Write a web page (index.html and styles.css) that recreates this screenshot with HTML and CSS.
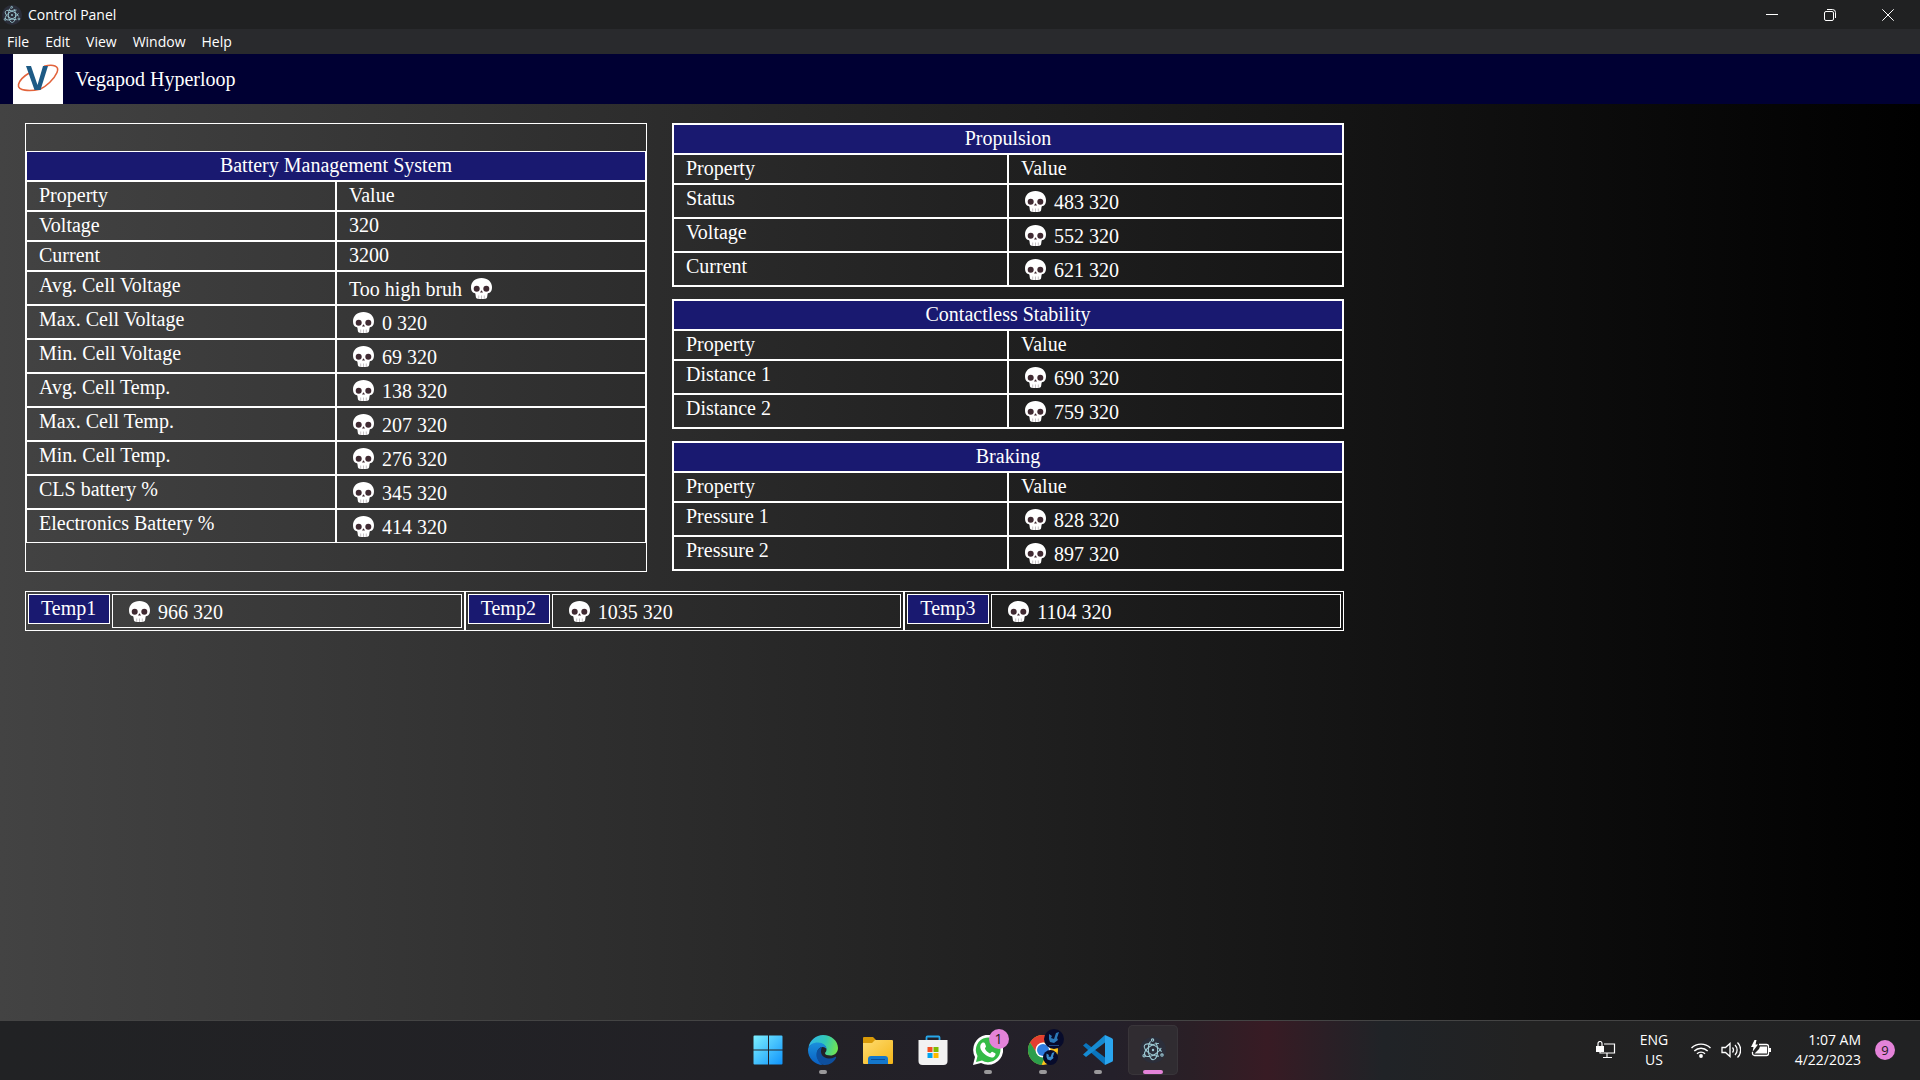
FILE: index.html
```html
<!DOCTYPE html>
<html lang="en">
<head>
<meta charset="utf-8">
<meta name="viewport" content="width=device-width, initial-scale=1">
<title>Control Panel</title>
<link rel="stylesheet" href="styles.css">
</head>
<body>
<svg class="sprite" aria-hidden="true">
  <symbol id="skull" viewBox="0 0 28 21">
    <path fill="#fff" d="M14.500 0C8.300 0 4 3.900 4 9c0 2.600.5 4.300 1.700 5.200.9.700 2.500.5 2.700 1.500l.5 3.600c.2 1.200 1.500 1.700 2.600 1.700h6c1.100 0 2.400-.5 2.600-1.700l.5-3.600c.2-1 1.800-.8 2.700-1.500C24.500 13.300 25 11.600 25 9c0-5.100-4.300-9-10.500-9z"/>
    <circle cx="9.700" cy="10.800" r="3" fill="#402a32"/>
    <circle cx="19.300" cy="10.800" r="3" fill="#402a32"/>
    <path fill="#402a32" d="M14.500 12.300l1.500 2.200h-3z"/>
    <path stroke="#b9b2b8" stroke-width=".8" d="M11.700 17.500V21M14.500 17.500V21M17.300 17.500V21"/>
  </symbol>
  <symbol id="electron" viewBox="0 0 24 24">
    <circle cx="12" cy="12" r="12" fill="#2b2e3a"/>
    <g fill="none" stroke="#9fccd6" stroke-width="1">
      <ellipse cx="12" cy="12" rx="9" ry="4.300" stroke-dasharray="37 6" stroke-dashoffset="-3" transform="rotate(-32 12 12)"/>
      <ellipse cx="12" cy="12" rx="9" ry="4.300" stroke-dasharray="37 6" stroke-dashoffset="-3" transform="rotate(28 12 12)"/>
      <ellipse cx="12" cy="12" rx="9" ry="4.300" stroke-dasharray="37 6" stroke-dashoffset="18" transform="rotate(88 12 12)"/>
      <circle cx="3.800" cy="17.300" r="1.100"/><circle cx="20.300" cy="16.700" r="1.100"/><circle cx="11.600" cy="2.800" r="1.100"/>
    </g>
    <circle cx="12" cy="12" r="1.100" fill="#9fccd6"/>
  </symbol>
</svg>

<header class="titlebar">
  <svg class="app-icon" aria-hidden="true"><use href="#electron"/></svg>
  <span class="window-title">Control Panel</span>
  <div class="window-controls">
    <button type="button" aria-label="Minimize"><svg viewBox="0 0 12 12"><path d="M0 5.500h12"/></svg></button>
    <button type="button" aria-label="Restore"><svg viewBox="0 0 12 12"><path d="M3 .5h5.500a3 3 0 0 1 3 3V9"/><rect x=".5" y="2.500" width="9" height="9" rx="1.500"/></svg></button>
    <button type="button" aria-label="Close"><svg viewBox="0 0 12 12"><path d="M.3.3l11.400 11.400M11.700.3L.3 11.700"/></svg></button>
  </div>
</header>
<nav class="menubar" aria-label="Application menu">
  <button type="button">File</button>
  <button type="button">Edit</button>
  <button type="button">View</button>
  <button type="button">Window</button>
  <button type="button">Help</button>
</nav>

<div class="brand">
  <svg class="logo" viewBox="0 0 50 50" role="img" aria-label="Vegapod logo">
    <rect width="50" height="50" fill="#fff"/>
    <path fill="none" stroke="#e2633c" stroke-width="1.600" d="M31 12.200C40 10 47 11.500 44 18.500C41 25.500 33 32.500 27 35.200C17 37.500 4 37 5.500 30.500C6.500 26 11 22 17 18.500"/>
    <path fill="#1d5a85" d="M13 12h5l6.500 19L30 12h5l-7.500 24h-6z"/>
  </svg>
  <span>Vegapod Hyperloop</span>
</div>

<main class="dashboard">
  <div class="systems">
    <section class="battery">
      <table>
        <thead>
          <tr><th class="heading" colspan="2">Battery Management System</th></tr>
          <tr><th>Property</th><th>Value</th></tr>
        </thead>
        <tbody>
          <tr><td>Voltage</td><td>320</td></tr>
          <tr><td>Current</td><td>3200</td></tr>
          <tr><td>Avg. Cell Voltage</td><td class="reading">Too high bruh <svg class="skull"><use href="#skull"/></svg></td></tr>
          <tr><td>Max. Cell Voltage</td><td class="reading"><svg class="skull"><use href="#skull"/></svg> 0 320</td></tr>
          <tr><td>Min. Cell Voltage</td><td class="reading"><svg class="skull"><use href="#skull"/></svg> 69 320</td></tr>
          <tr><td>Avg. Cell Temp.</td><td class="reading"><svg class="skull"><use href="#skull"/></svg> 138 320</td></tr>
          <tr><td>Max. Cell Temp.</td><td class="reading"><svg class="skull"><use href="#skull"/></svg> 207 320</td></tr>
          <tr><td>Min. Cell Temp.</td><td class="reading"><svg class="skull"><use href="#skull"/></svg> 276 320</td></tr>
          <tr><td>CLS battery %</td><td class="reading"><svg class="skull"><use href="#skull"/></svg> 345 320</td></tr>
          <tr><td>Electronics Battery %</td><td class="reading"><svg class="skull"><use href="#skull"/></svg> 414 320</td></tr>
        </tbody>
      </table>
    </section>
    <div class="stack">
      <table class="framed">
        <thead>
          <tr><th class="heading" colspan="2">Propulsion</th></tr>
          <tr><th>Property</th><th>Value</th></tr>
        </thead>
        <tbody>
          <tr><td>Status</td><td class="reading"><svg class="skull"><use href="#skull"/></svg> 483 320</td></tr>
          <tr><td>Voltage</td><td class="reading"><svg class="skull"><use href="#skull"/></svg> 552 320</td></tr>
          <tr><td>Current</td><td class="reading"><svg class="skull"><use href="#skull"/></svg> 621 320</td></tr>
        </tbody>
      </table>
      <table class="framed">
        <thead>
          <tr><th class="heading" colspan="2">Contactless Stability</th></tr>
          <tr><th>Property</th><th>Value</th></tr>
        </thead>
        <tbody>
          <tr><td>Distance 1</td><td class="reading"><svg class="skull"><use href="#skull"/></svg> 690 320</td></tr>
          <tr><td>Distance 2</td><td class="reading"><svg class="skull"><use href="#skull"/></svg> 759 320</td></tr>
        </tbody>
      </table>
      <table class="framed">
        <thead>
          <tr><th class="heading" colspan="2">Braking</th></tr>
          <tr><th>Property</th><th>Value</th></tr>
        </thead>
        <tbody>
          <tr><td>Pressure 1</td><td class="reading"><svg class="skull"><use href="#skull"/></svg> 828 320</td></tr>
          <tr><td>Pressure 2</td><td class="reading"><svg class="skull"><use href="#skull"/></svg> 897 320</td></tr>
        </tbody>
      </table>
    </div>
  </div>
  <dl class="temps">
    <div class="temp"><dt>Temp1</dt><dd class="reading"><svg class="skull"><use href="#skull"/></svg> 966 320</dd></div>
    <div class="temp"><dt>Temp2</dt><dd class="reading"><svg class="skull"><use href="#skull"/></svg> 1035 320</dd></div>
    <div class="temp"><dt>Temp3</dt><dd class="reading"><svg class="skull"><use href="#skull"/></svg> 1104 320</dd></div>
  </dl>
</main>

<footer class="taskbar">
  <div class="apps">
    <button type="button" class="app" aria-label="Start">
      <svg viewBox="0 0 30 30"><defs><linearGradient id="win" x1="0" y1="0" x2="1" y2="1"><stop offset="0" stop-color="#7df0ff"/><stop offset="1" stop-color="#0f93fb"/></linearGradient></defs><path fill="url(#win)" d="M1.500.5H15V14.500H.5v-13a1 1 0 0 1 1-1zM16 .5h12.500a1 1 0 0 1 1 1v13H16zM.5 15.500H15v14H1.500a1 1 0 0 1-1-1zM16 15.500h13.500v13a1 1 0 0 1-1 1H16z"/></svg>
    </button>
    <button type="button" class="app running" aria-label="Edge">
      <svg viewBox="0 0 30 30"><defs><linearGradient id="e1" x1="0" y1=".3" x2="1" y2=".5"><stop offset="0" stop-color="#2fb4ea"/><stop offset=".55" stop-color="#33c9b5"/><stop offset="1" stop-color="#70e552"/></linearGradient><linearGradient id="e2" x1="0" y1="0" x2="0" y2="1"><stop offset="0" stop-color="#1a8fdc"/><stop offset="1" stop-color="#0a5fc2"/></linearGradient></defs>
      <path fill="url(#e1)" d="M.5 12C2 5 8 0 15 0c8.500 0 15 6 15 13 0 5-4 7.500-7.500 7.500-3 0-5.500-1-5.500-2.300 0-.8 1.500-1.400 1.500-3.700C18.500 11 15 8.500 11 8.500 6 8.500 2 10 .5 12z"/>
      <path fill="url(#e2)" d="M0 15C0 10 5 7.500 10 7.500c5 0 8.500 3 8.500 6.500 0 0-1.500-2-4-2-3 0-5.500 3-5.500 7 0 6 4 11 7 11h-1C6.500 30 0 23 0 15z"/>
      <path fill="#0e4f9d" d="M14 12c-4 1-7 6-5 11 1.500 4.500 5 7 8 7 5 0 9-3 11-7 .5-1-.3-1.500-1-1-2 1-4 1.500-6 1.500-6 0-10-5-7-11.500z"/></svg>
    </button>
    <button type="button" class="app" aria-label="File Explorer">
      <svg viewBox="0 0 30 30"><defs><linearGradient id="fo" x1="0" y1="0" x2="1" y2="1"><stop offset="0" stop-color="#ffdc70"/><stop offset="1" stop-color="#f4b518"/></linearGradient></defs><path fill="#d99a08" d="M1 2h9l3 3v5H0V3a1 1 0 0 1 1-1z"/><path fill="url(#fo)" d="M12 5h17a1 1 0 0 1 1 1v22a1 1 0 0 1-1 1H1a1 1 0 0 1-1-1V8h9z"/><path fill="#1477cc" d="M8 21h14a3 3 0 0 1 3 3v5H5v-5a3 3 0 0 1 3-3z"/><path stroke="#0b4d96" d="M8 24.500h14"/></svg>
    </button>
    <button type="button" class="app" aria-label="Microsoft Store">
      <svg viewBox="0 0 30 30"><path fill="none" stroke="#27a7ea" stroke-width="1.800" d="M8.500 6V2.500a1 1 0 0 1 1-1h11a1 1 0 0 1 1 1V6"/><path fill="#f2f2f2" d="M.5 5h29v21a4 4 0 0 1-4 4h-21a4 4 0 0 1-4-4z"/><path fill="#f25022" d="M9.500 12h5v5h-5z"/><path fill="#7fba00" d="M15.500 12h5v5h-5z"/><path fill="#00a4ef" d="M9.500 18h5v5h-5z"/><path fill="#ffb900" d="M15.500 18h5v5h-5z"/></svg>
    </button>
    <button type="button" class="app running" aria-label="WhatsApp, 1 new">
      <svg viewBox="0 0 30 30"><path fill="#fff" d="M0 30l2-8A15 15 0 1 1 8 28z"/><path fill="#34bb46" d="M3 27l1.500-6A12.300 12.300 0 1 1 9 25.500z"/><path fill="#fff" d="M10 7.500c1-.3 1.500 0 2 1l1 2.700c.2.600-1.300 1.800-1 2.500 1 2 2.500 3.500 5 4.700.6.200 1.500-1.800 2.200-1.600l3 1.500c1 .5-.2 3-1.200 3.600-3 1.600-7-.5-9.500-2.800C8.500 16.500 6.500 13 7.500 10c.4-1.200 1.300-2.200 2.500-2.500z"/></svg>
      <span class="badge">1</span>
    </button>
    <button type="button" class="app running chrome" aria-label="Chrome">
      <svg viewBox="0 0 36 36"><g transform="translate(0 6)"><circle cx="15" cy="15" r="15" fill="#fdc51b"/><path fill="#e43e30" d="M2 7.500A15 15 0 0 1 28 7.500H15L9 19z"/><path fill="#2c9e4b" d="M2 7.500L9.500 19l5.500 3 2 0L13.500 30A15 15 0 0 1 2 7.500z"/><circle cx="15" cy="15" r="7.500" fill="#fff"/><circle cx="15" cy="15" r="6" fill="#2f7de1"/></g><circle cx="26" cy="10" r="10" fill="#070b2b"/><path fill="#2a78b8" d="M21 5l3 2-1 2 3 1 2-6 3-1-2 6 1 2-4 3-4-1-1-3z"/><path stroke="#214a83" d="M21 16.500h10"/><circle cx="22.500" cy="28.500" r="7.500" fill="#070b2b"/><path fill="#3a8ccb" d="M18.500 24.500l2.500 1.500-.5 1.500 2 .5 1.500-4 2.500-1-1.500 4.500.5 1.500-3 2.500-3-1-1-2.500z"/></svg>
    </button>
    <button type="button" class="app running" aria-label="Visual Studio Code">
      <svg viewBox="0 0 30 30"><path fill="#0a75bd" d="M0 10.500l3-2.500L22 22.500V30L0 10.500z"/><path fill="#168bd2" d="M0 19.500L3 22 22 7.500V0L0 19.500z"/><path fill="#2aa5ef" d="M22 0l6.500 3a2 2 0 0 1 1.500 2v20a2 2 0 0 1-1.500 2L22 30z"/></svg>
    </button>
    <button type="button" class="app running active" aria-label="Control Panel">
      <svg viewBox="0 0 30 30"><use href="#electron" x="2" y="2" width="26" height="26"/></svg>
    </button>
  </div>
  <div class="tray">
    <svg class="net" viewBox="0 0 20 18" aria-hidden="true"><path fill="none" stroke="#fff" stroke-width="1.200" d="M8 3h10.500v9H4v-1M11 12v4M7 16.500h9"/><path fill="#fff" d="M0 5h8v6H0z"/><path fill="none" stroke="#fff" stroke-width="1.200" d="M2 5V2.500a1.500 1.500 0 0 1 4 0V5"/></svg>
    <div class="lang">ENG<br>US</div>
    <div class="status">
      <svg viewBox="0 0 20 20" role="img" aria-label="Wi-Fi"><g fill="none" stroke="#fff" stroke-width="1.400"><path d="M.5 8a13.500 13.500 0 0 1 19 0M3.300 11a9.500 9.500 0 0 1 13.400 0M6 13.800a5.700 5.700 0 0 1 8 0"/></g><circle cx="10" cy="16" r="1.900" fill="#fff"/></svg>
      <svg viewBox="0 0 20 20" role="img" aria-label="Volume"><path fill="none" stroke="#fff" stroke-width="1.300" d="M1 7.500h3.500L9 3.500v13l-4.500-4H1zM11.500 7.500a4 4 0 0 1 0 5M14 5a7 7 0 0 1 0 10M16.500 2.500a10.500 10.500 0 0 1 0 15"/></svg>
      <svg viewBox="0 0 20 20" role="img" aria-label="Battery charging"><path fill="none" stroke="#fff" stroke-width="1.300" d="M8 4.500h7.500a2 2 0 0 1 2 2v7a2 2 0 0 1-2 2H3.500a2 2 0 0 1-2-2V12"/><path fill="#fff" d="M9 6.500h7v7H3.500L8 9zM18 8h2v4h-2zM3.500 0L0 7h2.500L1.500 12 7 4.500H4.500L5.500 0z"/></svg>
    </div>
    <div class="clock">1:07 AM<br>4/22/2023</div>
    <span class="count">9</span>
  </div>
</footer>
</body>
</html>
```
FILE: styles.css
```css
* {
  box-sizing: border-box;
}

body {
  margin: 0;
  min-height: 100vh;
  display: flex;
  flex-direction: column;
  background: linear-gradient(to right, #434343, #000);
  color: #fff;
  font: 20px/23px "Liberation Serif", "Times New Roman", serif;
}

button {
  border: 0;
  padding: 0;
  background: none;
  color: inherit;
  font: inherit;
}

.sprite {
  display: none;
}

/* window chrome */
.titlebar,
.menubar,
.taskbar {
  font-family: "Open Sans", "Noto Sans", sans-serif;
  font-size: 14px;
  line-height: 20px;
}

.titlebar {
  display: flex;
  align-items: center;
  height: 29px;
  padding: 0 3px 0 2px;
  background: #202122;
}

.app-icon {
  width: 20px;
  height: 20px;
  margin-right: 6px;
}

.window-controls {
  display: flex;
  margin-left: auto;
}

.window-controls button {
  display: flex;
  align-items: center;
  justify-content: center;
  width: 58px;
  height: 28px;
}

.window-controls svg {
  width: 12px;
  height: 12px;
  fill: none;
  stroke: #fff;
}

.menubar {
  display: flex;
  gap: 16px;
  height: 25px;
  padding-left: 7px;
  background: #292a2d;
}

.brand {
  display: flex;
  align-items: center;
  gap: 12px;
  height: 50px;
  padding-left: 13px;
  background: #000033;
}

.logo {
  width: 50px;
  height: 50px;
}

/* telemetry */
.dashboard {
  flex: 1;
  width: 70%;
  padding-top: 19px;
}

.systems {
  display: grid;
  grid-template-columns: 1fr 1fr;
}

.battery {
  margin: 0 25px;
  padding: 27px 0 28px;
  border: 1px solid #fff;
}

.stack {
  display: flex;
  flex-direction: column;
  gap: 12px;
}

table {
  width: 100%;
  table-layout: fixed;
  border-collapse: separate;
  border-spacing: 0;
}

.framed {
  border: 1px solid #fff;
}

th,
td,
dt,
dd {
  margin: 0;
  padding: 2px 12px 3px;
  border: 1px solid #fff;
  font-weight: normal;
  text-align: left;
  vertical-align: top;
}

.heading {
  text-align: center;
}

.heading,
dt {
  background: #191970;
}

.reading {
  padding-top: 6px;
}

.skull {
  width: 28px;
  height: 21px;
  vertical-align: -3px;
}

.temps {
  display: grid;
  grid-template-columns: repeat(3, 1fr);
  margin: 19px 0 0 25px;
}

.temp {
  display: flex;
  align-items: flex-start;
  gap: 2px;
  padding: 2px;
  border: 1px solid #fff;
}

dt {
  min-width: 82px;
}

dd {
  flex: 1;
}

/* taskbar */
.taskbar {
  display: grid;
  grid-template-columns: 1fr auto 1fr;
  align-items: center;
  height: 60px;
  padding-bottom: 1px;
  border-top: 1px solid #444;
  background: linear-gradient(to right, #212224 0%, #222126 40%, #24202a 58%, #2a1f26 62%, #381b24 66%, #2b1f26 69%, #202327 72%, #222 80%, #212223 100%);
}

.apps {
  grid-column: 2;
  display: flex;
  gap: 5px;
}

.app {
  position: relative;
  display: flex;
  align-items: center;
  justify-content: center;
  width: 50px;
  height: 50px;
  border-radius: 5px;
}

.app svg {
  width: 30px;
  height: 30px;
}

.chrome svg {
  width: 36px;
  height: 36px;
  margin: 0 0 6px 6px;
}

.active {
  background: #302c31;
  box-shadow: inset 0 0 0 1px #39353a;
}

.running::after {
  content: "";
  position: absolute;
  bottom: 1px;
  left: 50%;
  width: 8px;
  height: 4px;
  margin-left: -4px;
  border-radius: 2px;
  background: #9a999b;
}

.active::after {
  width: 20px;
  margin-left: -10px;
  background: #e483d9;
}

.badge,
.count {
  width: 20px;
  height: 20px;
  border-radius: 50%;
  background: #e483d9;
  color: #1c1c1c;
  text-align: center;
}

.badge {
  position: absolute;
  top: 4px;
  right: 4px;
}

.tray {
  display: flex;
  align-items: center;
  justify-content: flex-end;
  padding-right: 25px;
}

.net {
  width: 20px;
  height: 18px;
  margin-right: 22px;
}

.lang {
  width: 32px;
  margin-right: 21px;
  text-align: center;
}

.status {
  display: flex;
  gap: 10px;
  margin-right: 20px;
}

.status svg {
  width: 20px;
  height: 20px;
}

.clock {
  min-width: 70px;
  margin-right: 14px;
  text-align: right;
}

.count {
  font-size: 13px;
}
```
